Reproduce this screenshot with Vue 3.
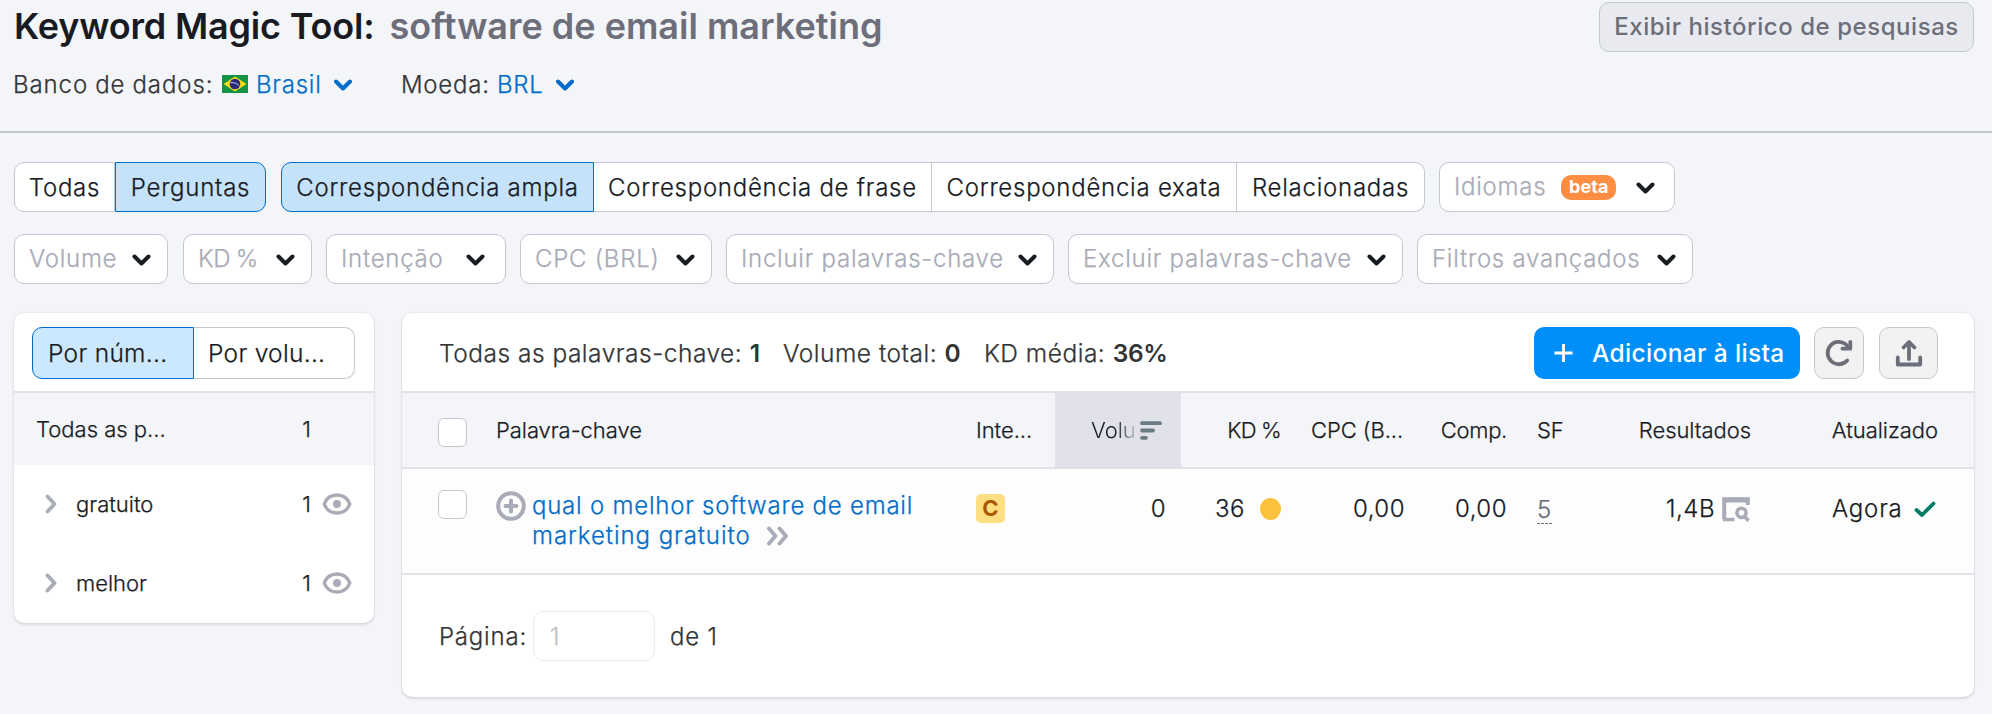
<script setup>
const matchTabs = [
  { label: 'Correspondência ampla', w: 313, on: true },
  { label: 'Correspondência de frase', w: 338 },
  { label: 'Correspondência exata', w: 305 },
  { label: 'Relacionadas', w: 188 },
]
const filters = [
  { label: 'Volume', w: 154 },
  { label: 'KD %', w: 129 },
  { label: 'Intenção', w: 180 },
  { label: 'CPC (BRL)', w: 192 },
  { label: 'Incluir palavras-chave', w: 328 },
  { label: 'Excluir palavras-chave', w: 335 },
  { label: 'Filtros avançados', w: 276 },
]
const groups = ['gratuito', 'melhor']
</script>

<template>
  <div class="page">
    <header class="head">
      <div class="title-row">
        <h1><span class="name">Keyword Magic Tool:</span><span class="query">software de email marketing</span></h1>
        <button class="history">Exibir histórico de pesquisas</button>
      </div>
      <div class="meta">
        <span class="meta-label db">Banco de dados:</span>
        <svg class="flag" width="26" height="18" viewBox="0 0 26 18">
          <rect width="26" height="18" fill="#149246" />
          <path d="M13 1.500L24.500 9L13 16.500L1.500 9Z" fill="#f6dc16" />
          <circle cx="13" cy="9" r="5.300" fill="#29287c" />
          <path d="M8.400 7.600C12 7.200 15.500 8.600 17.500 11" stroke="#c5cbe0" stroke-width="1" fill="none" />
        </svg>
        <span class="link br">Brasil</span>
        <svg class="chev blue" width="18" height="12" viewBox="0 0 18 12"><path d="M2 2.500L9 9.500L16 2.500" /></svg>
        <span class="meta-label cur">Moeda:</span>
        <span class="link brl">BRL</span>
        <svg class="chev blue" width="18" height="12" viewBox="0 0 18 12"><path d="M2 2.500L9 9.500L16 2.500" /></svg>
      </div>
    </header>

    <div class="filters first">
      <div class="seg">
        <button class="tab" :style="{ width: '101px' }">Todas</button>
        <button class="tab on" :style="{ width: '151px' }">Perguntas</button>
      </div>
      <div class="seg">
        <button v-for="t in matchTabs" :key="t.label" class="tab" :class="{ on: t.on }" :style="{ width: t.w + 'px' }">{{ t.label }}</button>
      </div>
      <button class="drop" :style="{ width: '236px' }">
        <span>Idiomas</span><span class="beta">beta</span>
        <svg class="chev lang" width="19" height="12" viewBox="0 0 18 12"><path d="M2 2.500L9 9.500L16 2.500" /></svg>
      </button>
    </div>
    <div class="filters second">
      <button v-for="f in filters" :key="f.label" class="drop" :style="{ width: f.w + 'px' }">
        <span :class="{ slim: f.label === 'KD %' }">{{ f.label }}</span>
        <svg class="chev" :class="{ inset: f.label === 'Intenção' }" width="19" height="12" viewBox="0 0 18 12"><path d="M2 2.500L9 9.500L16 2.500" /></svg>
      </button>
    </div>

    <main class="content">
      <aside class="card side">
        <div class="side-top">
          <div class="seg big">
            <button class="tab on">Por núm...</button>
            <button class="tab">Por volu...</button>
          </div>
        </div>
        <div class="side-all"><span>Todas as p...</span><span class="count">1</span></div>
        <div v-for="g in groups" :key="g" class="side-row">
          <svg class="arrow" width="12" height="20" viewBox="0 0 12 20"><path d="M2.500 2.500L9.500 10L2.500 17.500" /></svg>
          <span class="group">{{ g }}</span>
          <span class="count">1</span>
          <svg class="eye" width="30" height="22" viewBox="0 0 30 22">
            <path d="M2.200 11C4.500 5 9.300 2 15 2S25.500 5 27.800 11C25.500 17 20.700 20 15 20S4.500 17 2.200 11Z" />
            <circle cx="15" cy="11" r="4" />
          </svg>
        </div>
      </aside>

      <section class="card main">
        <div class="toolbar">
          <span class="sum s1">Todas as palavras-chave: <b>1</b></span>
          <span class="sum s2">Volume total: <b>0</b></span>
          <span class="sum s3">KD média: <b>36%</b></span>
          <button class="add">
            <svg width="19" height="20" viewBox="0 0 19 20"><path d="M9.500 1V19M.5 10H18.500" stroke="#fff" stroke-width="2.800" fill="none" /></svg>
            <span>Adicionar à lista</span>
          </button>
          <button class="icon-btn refresh">
            <svg width="28" height="28" viewBox="0 0 28 28" class="glyph"><path d="M22.200 21.500A11.200 11.200 0 1 1 20.500 5L24.500 9" /><path d="M25.300 2.800V9.700H17.500" /></svg>
          </button>
          <button class="icon-btn upload">
            <svg width="28" height="28" viewBox="0 0 28 28" class="glyph"><path d="M2.800 18.500V25.500H25.200V18.500" /><path d="M14 20V4M8.500 8.500L14 3L19.500 8.500" /></svg>
          </button>
        </div>

        <div class="grid thead">
          <span><i class="check-box" /></span>
          <span>Palavra-chave</span>
          <span>Inte...</span>
          <span class="vol"><span class="fade">Volu</span>
            <svg width="22" height="19" viewBox="0 0 22 19"><path d="M2 2.200H20M2 9.500H13M2 16.800H6" stroke="#6a7b83" stroke-width="3.800" stroke-linecap="round" /></svg>
          </span>
          <span class="r slim">KD %</span>
          <span class="pad">CPC (B...</span>
          <span class="r comp">Comp.</span>
          <span class="pad">SF</span>
          <span class="r">Resultados</span>
          <span class="r">Atualizado</span>
        </div>

        <div class="grid row">
          <span><i class="check-box row-check" /></span>
          <span class="kw">
            <svg width="30" height="30" viewBox="0 0 30 30"><circle cx="15" cy="15" r="12.800" /><path d="M15 9.500V20.500M9.500 15H20.500" /></svg>
            <span class="kw-text">qual o melhor software de email<br><span class="kw-last">marketing gratuito</span><svg class="more" width="24" height="20" viewBox="0 0 24 20"><path d="M3 2.500L9.500 10L3 17.500M13.500 2.500L20 10L13.500 17.500" /></svg></span>
          </span>
          <span class="cell"><b class="intent">C</b></span>
          <span class="cell r volnum">0</span>
          <span class="cell r">36<i class="dot" /></span>
          <span class="cell r">0,00</span>
          <span class="cell r">0,00</span>
          <span class="cell pad"><span class="sf">5</span></span>
          <span class="cell r res">1,4B
            <svg class="serp" width="28" height="25" viewBox="0 0 28 25">
              <path d="M2.200 22.300V2.200H25.800V8" stroke-width="4" />
              <path d="M1 22.500H12.500" stroke-width="3.500" />
              <path d="M1 3H27" stroke-width="5" />
              <circle cx="19.500" cy="15.800" r="4.600" stroke-width="3.600" />
              <path d="M22.500 19.500L26.600 23.800" stroke-width="3.600" />
            </svg>
          </span>
          <span class="cell upd">Agora<svg width="22" height="17" viewBox="0 0 22 17"><path d="M2.500 9L8 14L19.500 2.500" /></svg></span>
        </div>

        <div class="pager">
          <span class="pg">Página:</span><span class="page-input">1</span><span class="of">de 1</span>
        </div>
      </section>
    </main>
  </div>
</template>

<style>
body { background: #f4f5f9; }
</style>

<style scoped>
.page { height: 714px; overflow: hidden; background: #f4f5f9; color: #333436; font: 300 24px/30px Inter, "Liberation Sans", sans-serif; letter-spacing: .75px; -webkit-text-stroke: .25px currentColor; box-sizing: border-box; }
.page * { box-sizing: border-box; }
button { font: inherit; letter-spacing: inherit; color: inherit; padding: 0; margin: 0; white-space: nowrap; }
h1, b, .history, .add, .beta { -webkit-text-stroke-width: 0; }
svg { flex: none; fill: none; display: block; }
.slim { word-spacing: -1px; letter-spacing: -.3px; }
.head { height: 133px; border-bottom: 2px solid #c4c7d2; }
.title-row { display: flex; justify-content: space-between; padding: 2px 18px 0 14px; height: 70px; }
h1 { margin: 0; font-size: 36px; line-height: 48px; font-weight: 600; letter-spacing: 0; color: #191b23; display: flex; white-space: nowrap; }
.name { letter-spacing: -.18px; }
.query { color: #6c6e79; margin-left: 15px; }
.history { width: 375px; height: 50px; border: 1px solid #c4c7cf; border-radius: 10px; background: #e9eaef; color: #6c6e79; font-weight: 500; letter-spacing: .55px; }
.meta { display: flex; align-items: center; height: 30px; padding-left: 13px; white-space: nowrap; }
.db { width: 209px; letter-spacing: .9px; word-spacing: -.5px; }
.flag { margin-top: -3px; }
.meta .chev { margin-top: -1px; }
.link { color: #006dca; }
.br { margin-left: 8px; width: 78px; }
.cur { margin-left: 49px; width: 96px; }
.brl { width: 59px; }
.chev path { stroke: #191b23; stroke-width: 4; stroke-linecap: round; stroke-linejoin: round; }
.chev.blue path { stroke: #006dca; }

.filters { display: flex; gap: 14px; padding-left: 14px; height: 50px; color: #191b23; }
.first { margin-top: 29px; }
.second { margin-top: 22px; }
.second .drop:first-child { margin-right: 1px; }
.seg { display: flex; height: 50px; }
.tab { border: 1px solid #c4c7cf; border-left-width: 0; background: #fff; height: 100%; padding-top: 1px; }
.tab:first-child { border-left-width: 1px; border-radius: 10px 0 0 10px; }
.tab:last-child { border-radius: 0 10px 10px 0; }
.tab.on { background: #c4e2fa; border: 1px solid #006dca; }
.seg + .seg { margin-left: 1px; }
.drop { display: flex; align-items: center; border: 1px solid #c4c7cf; border-radius: 10px; background: #fff; color: #a9abb6; padding: 0 16px 0 14px; }
.drop .chev { margin-left: auto; position: relative; top: 1px; }
.drop .chev.inset { margin-right: 4px; }
.drop .chev.lang { margin-right: 3px; }
.beta { margin-left: 15px; width: 55px; height: 25px; border-radius: 10px; background: #ff8e43; color: #fff; font: 700 18px/24px Inter, sans-serif; letter-spacing: .1px; }

.content { display: flex; align-items: flex-start; gap: 28px; padding: 29px 18px 0 14px; }
.card { background: #fff; border-radius: 10px; box-shadow: 0 0 2px rgba(25, 27, 35, .16), 0 2px 3px rgba(25, 27, 35, .1); overflow: hidden; }
.side { width: 360px; height: 310px; flex: none; color: #191b23; font-size: 22px; letter-spacing: 0; }
.side-top { height: 80px; padding: 14px 0 0 18px; border-bottom: 2px solid #e0e1e9; }
.big { height: 52px; font-size: 24.500px; letter-spacing: .3px; }
.big .tab { width: 161px; text-align: left; padding: 0 0 0 14px; }
.big .tab.on { width: 162px; background: #cce8fe; padding-left: 15px; }
.side-all { height: 72px; background: #f4f5f9; display: flex; align-items: center; padding: 0 63px 0 22px; justify-content: space-between; }
.side-row { height: 79px; display: flex; align-items: center; padding: 0 22px 1px 31px; }
.arrow path, .more path { stroke: #a9abb6; stroke-width: 3.800; stroke-linecap: round; stroke-linejoin: round; }
.group { margin-left: 19px; }
.side-row .count { margin-left: auto; margin-right: 11px; }
.eye path { stroke: #a9abb6; stroke-width: 3.400; }
.eye circle { fill: #a9abb6; }

.main { width: 1572px; height: 384px; }
.toolbar { height: 80px; border-bottom: 2px solid #e0e1e9; padding: 14px 36px 12px 37px; display: flex; align-items: center; white-space: nowrap; font-size: 24.500px; letter-spacing: .5px; }
.s1 { width: 344px; }
.s2 { width: 201px; }
.sum b { font-weight: 600; }
.s3 b { letter-spacing: -.3px; }
.add { margin-left: auto; width: 266px; height: 52px; border: 0; border-radius: 10px; background: #008ff8; color: #fff; font-weight: 500; letter-spacing: .35px; display: flex; align-items: center; padding-left: 20px; gap: 19px; }
.icon-btn { height: 52px; border: 1px solid #c4c7cf; border-radius: 10px; background: #f2f2f3; display: flex; align-items: center; justify-content: center; }
.refresh { width: 50px; margin-left: 14px; }
.upload { width: 59px; margin-left: 15px; }
.glyph path { stroke: #6c6e79; stroke-width: 3.800; stroke-linecap: round; stroke-linejoin: round; }
.grid { display: grid; grid-template-columns: 58px 480px 79px 126px 100px 124px 102px 76px 168px 187px; padding: 0 36px; white-space: nowrap; }
.thead { height: 76px; border-bottom: 2px solid #e0e1e9; background: #f4f5f9; color: #191b23; font-size: 22px; line-height: 74px; letter-spacing: -.05px; }
.r { text-align: right; }
.thead .slim { letter-spacing: -.5px; word-spacing: -1px; }
.comp { letter-spacing: -.3px; }
.pad { padding-left: 30px; }
.check-box { display: block; width: 29px; height: 29px; border: 1px solid #c4c7cf; border-radius: 6px; background: #fff; margin-top: 25px; }
.row-check { margin-top: 21px; }
.vol { background: #e0e1e9; display: flex; align-items: center; padding-left: 36px; }
.fade { width: 49px; flex: none; background: linear-gradient(90deg, #191b23 50%, rgba(25, 27, 35, .2) 90%); background-clip: text; -webkit-background-clip: text; color: transparent; -webkit-text-stroke-width: 0; }
.row { height: 106px; border-bottom: 2px solid #e0e1e9; background: #fdfdfe; color: #191b23; }
.cell { display: flex; align-items: center; height: 30px; margin-top: 25px; letter-spacing: .5px; }
.cell.r { justify-content: flex-end; }
.kw { display: flex; padding-top: 22px; color: #006dca; }
.kw > svg { stroke: #a9abb6; stroke-width: 4; stroke-linecap: round; }
.kw-text { margin-left: 6px; letter-spacing: .77px; }
.kw-last { letter-spacing: .95px; }
.more { display: inline-block; margin-left: 15px; vertical-align: -2px; }
.intent { width: 29px; height: 29px; margin-top: -1px; border-radius: 5px; background: #fdde81; color: #a75800; font: 700 22px/29px Inter, sans-serif; text-align: center; letter-spacing: 0; }
.volnum { padding-right: 15px; }
.dot { width: 21px; height: 22px; border-radius: 50%; background: #fdc23c; margin-left: 15px; margin-top: -1px; }
.sf { color: #6c6e79; border-bottom: 1px dashed #6c6e79; height: 30px; line-height: 31px; }
.res { padding-right: 1px; }
.serp { margin-left: 7px; stroke: #a9abb6; }
.upd { padding-left: 81px; letter-spacing: .8px; }
.upd svg { margin-left: 11px; stroke: #007c65; stroke-width: 3.800; stroke-linecap: round; stroke-linejoin: round; }
.pager { display: flex; align-items: center; padding: 36px 0 0 37px; white-space: nowrap; letter-spacing: .8px; }
.pg { width: 94px; padding-top: 1px; }
.page-input { width: 122px; height: 50px; border: 1px solid #ececef; border-radius: 10px; padding-left: 16px; line-height: 49px; color: #bfbfc2; }
.of { margin-left: 15px; padding-top: 1px; }
</style>
